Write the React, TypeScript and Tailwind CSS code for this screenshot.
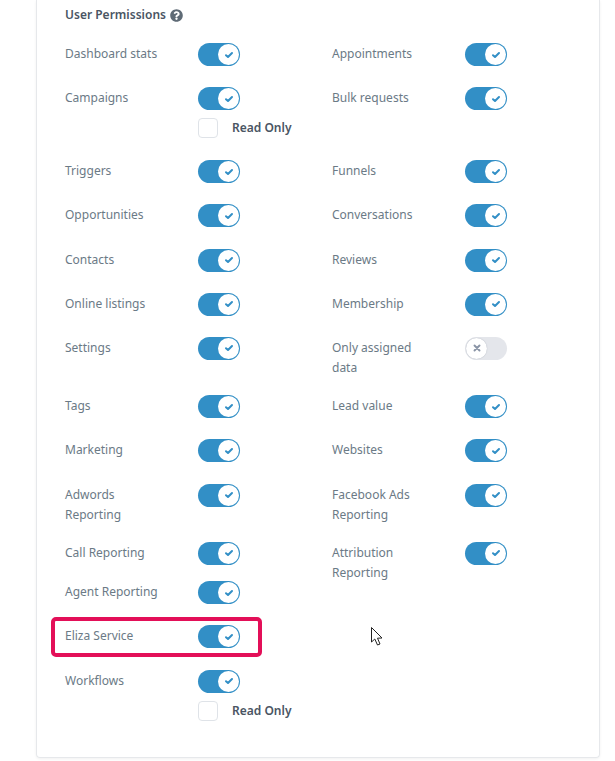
import { FaQuestionCircle } from "react-icons/fa";

function Toggle({ on = true }: { on?: boolean }) {
  return (
    <div className={on ? "relative h-[23px] w-[42px] shrink-0 rounded-full bg-[#328fc6]" : "relative h-[23px] w-[42px] shrink-0 rounded-full bg-[#e4e6eb]"}>
      <div className={on ? "absolute right-[1px] top-[1px] flex h-[21px] w-[21px] items-center justify-center rounded-full bg-white" : "absolute left-[1px] top-[1px] flex h-[21px] w-[21px] items-center justify-center rounded-full bg-white shadow-[0_0_1px_#9ca3af]"}>
        {on ? (
          <svg width="10" height="8" viewBox="0 0 10 8" fill="none" stroke="#328fc6" strokeWidth="2" strokeLinecap="round" strokeLinejoin="round">
            <path d="M2 4.2 L4 6 L8 2" />
          </svg>
        ) : (
          <svg width="8" height="8" viewBox="0 0 8 8" fill="none" stroke="#8a94a6" strokeWidth="1.9" strokeLinecap="round">
            <path d="M1.5 1.5 L6.5 6.5 M6.5 1.5 L1.5 6.5" />
          </svg>
        )}
      </div>
    </div>
  );
}

function Perm({ label, on = true, readOnly = false }: { label: string; on?: boolean; readOnly?: boolean }) {
  return (
    <div className="flex w-[267px] items-start">
      <div className="w-[133px] pr-[30px] pt-[1px] text-[12px] leading-[20px] text-[#6b7a86]">{label}</div>
      <div className="flex flex-col">
        <Toggle on={on} />
        {readOnly && (
          <div className="mt-[8px] flex items-center gap-[14px]">
            <div className="h-[20px] w-[20px] rounded-[4px] border border-[#dfe3e8] bg-white" />
            <span className="text-[12px] font-semibold leading-[20px] text-[#4a5563]">Read Only</span>
          </div>
        )}
      </div>
    </div>
  );
}

const rows: { h: string; left?: { label: string; readOnly?: boolean }; right?: { label: string; on?: boolean } }[] = [
  { h: "h-[44.2px]", left: { label: "Dashboard stats" }, right: { label: "Appointments" } },
  { h: "h-[73px]", left: { label: "Campaigns", readOnly: true }, right: { label: "Bulk requests" } },
  { h: "h-[44.2px]", left: { label: "Triggers" }, right: { label: "Funnels" } },
  { h: "h-[44.2px]", left: { label: "Opportunities" }, right: { label: "Conversations" } },
  { h: "h-[44.2px]", left: { label: "Contacts" }, right: { label: "Reviews" } },
  { h: "h-[44.2px]", left: { label: "Online listings" }, right: { label: "Membership" } },
  { h: "h-[58.2px]", left: { label: "Settings" }, right: { label: "Only assigned data", on: false } },
  { h: "h-[44.2px]", left: { label: "Tags" }, right: { label: "Lead value" } },
  { h: "h-[44.2px]", left: { label: "Marketing" }, right: { label: "Websites" } },
  { h: "h-[58.2px]", left: { label: "Adwords Reporting" }, right: { label: "Facebook Ads Reporting" } },
  { h: "h-[39.6px]", left: { label: "Call Reporting" }, right: { label: "Attribution Reporting" } },
  { h: "h-[44.2px]", left: { label: "Agent Reporting" } },
  { h: "h-[44.2px]", left: { label: "Eliza Service" } },
  { h: "h-[44.2px]", left: { label: "Workflows", readOnly: true } },
];

export default function App() {
  return (
    <div className="relative h-[761px] w-[615px] overflow-hidden bg-white font-['Noto_Sans',sans-serif]">
      <div className="ml-[36px] h-[758px] w-[564px] rounded-b-[4px] border-x border-b border-[#e6e8eb] pl-[28px] pt-[5px] shadow-[0_1px_3px_rgba(0,0,0,0.06)]">
        <div className="flex h-[20px] items-center gap-[4px] text-[12px] font-semibold text-[#4a5563]">
          User Permissions
          <FaQuestionCircle className="h-[13px] w-[13px] text-[#5f6b76]" />
        </div>
        <div className="mt-[18px]">
          {rows.map((r) => (
            <div key={r.left?.label} className={`flex ${r.h}`}>
              {r.left && <Perm label={r.left.label} readOnly={r.left.readOnly} />}
              {r.right && <Perm label={r.right.label} on={r.right.on} />}
            </div>
          ))}
        </div>
      </div>
      <div className="absolute left-[51px] top-[617px] h-[40px] w-[211px] rounded-[5px] border-[4px] border-[#e30f58]" />
      <svg className="absolute left-[370px] top-[626px]" width="14" height="21" viewBox="0 0 14 21">
        <path d="M1.5 1.5 V16 L4.8 13 L7.5 19 L10 18 L7.5 12.2 L12 12 Z" fill="#fff" stroke="#222" strokeWidth="1" strokeLinejoin="round" />
      </svg>
    </div>
  );
}
